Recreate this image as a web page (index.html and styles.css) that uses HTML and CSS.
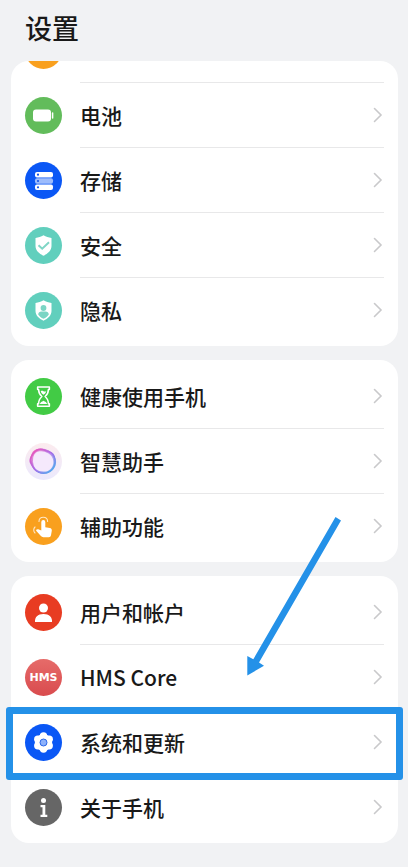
FILE: index.html
```html
<!DOCTYPE html>
<html lang="zh-CN">
<head>
<meta charset="utf-8">
<meta name="viewport" content="width=device-width, initial-scale=1">
<title>设置</title>
<link rel="stylesheet" href="styles.css">
</head>
<body>
<svg class="defs" aria-hidden="true">
  <symbol id="chevron" viewBox="0 0 10 16"><path d="M1.500 1.500 8 8l-6.500 6.500" fill="none" stroke="#c9c9cb" stroke-width="1.600" stroke-linecap="round"/></symbol>
</svg>
<header class="title-bar"><h1>设置</h1></header>
<main class="settings">
  <nav class="card card-scrolled">
    <div class="row row-cut">
      <span class="icon orange"></span>
      <span class="body"></span>
    </div>
    <a class="row" href="#battery">
      <svg class="icon green" viewBox="0 0 37 37" aria-hidden="true"><rect x="8" y="12.500" width="18" height="12" rx="3" fill="#fff"/><path d="M27.600 16v5" stroke="#fff" stroke-width="1.500" stroke-linecap="round"/></svg>
      <span class="body">电池<svg class="chevron"><use href="#chevron"/></svg></span>
    </a>
    <a class="row" href="#storage">
      <svg class="icon blue" viewBox="0 0 37 37" aria-hidden="true"><rect x="10" y="10" width="18" height="5.400" rx="2" fill="#fff"/><rect x="10" y="16.300" width="18" height="5.400" rx="2" fill="#9dbcfc"/><rect x="10" y="22.600" width="18" height="5.400" rx="2" fill="#fff"/><g fill="#1554e8"><circle cx="13" cy="12.700" r="1.100"/><circle cx="13" cy="19" r="1.100"/><circle cx="13" cy="25.300" r="1.100"/></g></svg>
      <span class="body">存储<svg class="chevron"><use href="#chevron"/></svg></span>
    </a>
    <a class="row" href="#security">
      <svg class="icon teal" viewBox="0 0 37 37" aria-hidden="true"><path d="M18.500 8.300c2.500 1.400 5 2.200 8 2.800v8c0 4.500-3.500 7.600-8 9.600-4.500-2-8-5.100-8-9.600v-8c3-.6 5.500-1.400 8-2.800z" fill="#fff"/><path d="m13.500 18.200 3.700 3.500 6.800-6.500" fill="none" stroke="#80d6c6" stroke-width="2"/></svg>
      <span class="body">安全<svg class="chevron"><use href="#chevron"/></svg></span>
    </a>
    <a class="row" href="#privacy">
      <svg class="icon teal" viewBox="0 0 37 37" aria-hidden="true"><path d="M18.500 8.300c2.500 1.400 5 2.200 8 2.800v8c0 4.500-3.500 7.600-8 9.600-4.500-2-8-5.100-8-9.600v-8c3-.6 5.500-1.400 8-2.800z" fill="#fff"/><g fill="#7bd5c4"><circle cx="18.500" cy="16" r="2.900"/><path d="M13.200 22.600c0-2 1.500-3 3.300-3h4c1.800 0 3.300 1 3.300 3-1.200 2-3 3.300-5.300 4.200-2.300-.9-4.100-2.200-5.300-4.200z"/></g></svg>
      <span class="body">隐私<svg class="chevron"><use href="#chevron"/></svg></span>
    </a>
  </nav>

  <nav class="card">
    <a class="row" href="#balance">
      <svg class="icon lime" viewBox="0 0 37 37" aria-hidden="true"><path d="M12.600 9h11.800v2.500h-1c0 3.500-1 5-3.300 7 2.300 2 3.300 3.700 3.300 7.300h1v2.500H12.600v-2.500h1c0-3.600 1-5.300 3.300-7.300-2.300-2-3.300-3.500-3.300-7h-1z" fill="none" stroke="#fff" stroke-width="1.500" stroke-linejoin="round"/><path d="M15.700 13.300c1-.8 1.800-.6 2.800-.1s2 .4 2.800 0c-.4 1.500-1.300 2.600-2.800 3.600-1.500-1-2.400-2-2.800-3.500zM14.800 26c.5-1.700 2-2.400 3.700-3.300 1.700.9 3.200 1.600 3.700 3.300z" fill="#fff"/></svg>
      <span class="body">健康使用手机<svg class="chevron"><use href="#chevron"/></svg></span>
    </a>
    <a class="row" href="#assistant">
      <svg class="icon pale" viewBox="0 0 37 37" aria-hidden="true"><defs><linearGradient id="ring" x1="0" y1="0" x2="1" y2="1"><stop offset="0" stop-color="#f452b4"/><stop offset=".5" stop-color="#a76de8"/><stop offset="1" stop-color="#3eb7f0"/></linearGradient></defs><circle cx="18.500" cy="18.500" r="12" fill="#f5e9fc"/><g fill="none" stroke="url(#ring)"><path d="M13.500 6.500c4-1 6 1 10 2 4 1.200 6 4 6.500 8 .5 5-1 8-3.500 10.500-4 3.500-9 4-13 2-4-1.500-6-5-8-9.500-1.500-4 3-11.500 8-13z" stroke-width="1.500"/><path d="M9.500 8c3.500-3 10-2 14 0 4 2.500 6.500 6 7 11 0 5-4 10-9 11-5 .7-10-1-12-4-2-3.500-4-6-3.500-10 .4-3 1.500-6.500 3.500-8z" stroke-width="1.300" opacity=".8"/><path d="M15 7.200c6 .2 13.500 3 14.200 10.800C30 25 25 29.500 18.500 29.500 11 29.500 7.500 25 7 18.500 6.700 12 9 8 15 7.200z" stroke-width="1.800" opacity=".7"/></g></svg>
      <span class="body">智慧助手<svg class="chevron"><use href="#chevron"/></svg></span>
    </a>
    <a class="row" href="#accessibility">
      <svg class="icon orange" viewBox="0 0 37 37" aria-hidden="true"><path d="M16.300 14a2 2 0 0 1 4 0v5.300l4.500.7c1.500.3 2.200 1.200 2 2.700l-.8 4.600c-.3 1.300-1 1.900-2.200 1.900h-5.500c-1 0-1.700-.4-2.400-1.100l-4.500-5c-.9-1.200.5-2.400 1.900-1.800l3 1.300z" fill="#fff"/><g fill="none" stroke="#fff" stroke-width="1.100" stroke-linecap="round" opacity=".75"><path d="M14 13.500c0-5.700 8.600-5.700 8.600 0M10 19c-1.700 1.600-1.700 4.200 0 6"/></g></svg>
      <span class="body">辅助功能<svg class="chevron"><use href="#chevron"/></svg></span>
    </a>
  </nav>

  <nav class="card">
    <a class="row" href="#accounts">
      <svg class="icon red" viewBox="0 0 37 37" aria-hidden="true"><g fill="#fff"><circle cx="18.500" cy="14" r="4.500"/><path d="M10 28c-.4-5 2.700-8 8.500-8s8.900 3 8.500 8z"/></g></svg>
      <span class="body">用户和帐户<svg class="chevron"><use href="#chevron"/></svg></span>
    </a>
    <a class="row" href="#hms">
      <span class="icon coral" aria-hidden="true">HMS</span>
      <span class="body">HMS Core<svg class="chevron"><use href="#chevron"/></svg></span>
    </a>
    <a class="row row-marked" href="#system">
      <svg class="icon blue" viewBox="0 0 37 37" aria-hidden="true"><g fill="#fff"><circle cx="18.500" cy="18.500" r="8.600"/><circle cx="18.500" cy="12" r="3.700"/><circle cx="24.200" cy="15.200" r="3.700"/><circle cx="24.200" cy="21.800" r="3.700"/><circle cx="18.500" cy="25" r="3.700"/><circle cx="12.800" cy="21.800" r="3.700"/><circle cx="12.800" cy="15.200" r="3.700"/></g><circle cx="18.500" cy="18.500" r="3.500" fill="#8db1fb" stroke="#2b66e8" stroke-width="1"/></svg>
      <span class="body">系统和更新<svg class="chevron"><use href="#chevron"/></svg></span>
    </a>
    <a class="row" href="#about">
      <svg class="icon gray" viewBox="0 0 37 37" aria-hidden="true"><circle cx="18.500" cy="11.500" r="2.500" fill="#fff"/><path d="M15.500 16h4.800v9.800h2v2.200h-6.800v-2.200h2v-7.600h-2z" fill="#fff"/></svg>
      <span class="body">关于手机<svg class="chevron"><use href="#chevron"/></svg></span>
    </a>
  </nav>
  <svg class="arrow" viewBox="0 0 96 160" aria-hidden="true"><path d="M89.500 0 95 3.500 13 145.500l5 3.200L1.300 158.500V139l6 3.300z" fill="#2491e8"/></svg>
</main>
</body>
</html>
```
FILE: styles.css
```css
* { box-sizing: border-box; }

body {
  margin: 0;
  background: #f1f2f4;
  color: #191919;
  font-family: "Noto Sans CJK SC", sans-serif;
  font-weight: 500;
}

.defs { display: none; }

.title-bar {
  height: 61px;
  padding: 8px 25px 0;
}

h1 {
  margin: 0;
  font-size: 27px;
  font-weight: 500;
  line-height: 40px;
}

.settings {
  position: relative;
  display: flex;
  flex-direction: column;
  gap: 14px;
  padding: 0 10px 24px 11px;
}

.card {
  padding: 4px 14px;
  background: #fff;
  border-radius: 18px;
}

.card-scrolled {
  padding-top: 0;
  overflow: hidden;
}

.row {
  position: relative;
  display: flex;
  align-items: center;
  gap: 18px;
  color: inherit;
  text-decoration: none;
}

.row-cut { margin-top: -43px; }

.body {
  flex: 1;
  display: flex;
  align-items: center;
  justify-content: space-between;
  height: 65px;
  border-bottom: 1px solid #e8e8e9;
  font-size: 21px;
  line-height: 32px;
}

.row:last-child .body {
  height: 64px;
  border-bottom: 0;
}

.icon {
  flex: none;
  width: 37px;
  height: 37px;
  border-radius: 50%;
}

.chevron {
  width: 10px;
  height: 16px;
  margin-right: 1px;
}

.orange { background: #f9a01e; }
.green { background: #62bc5b; }
.blue { background: #0a57f5; }
.teal { background: #61cfbd; }
.lime { background: #42cb45; }
.pale { background: linear-gradient(#fcebee, #ebe9fd); }
.red { background: #e83c22; }
.gray { background: #666; }

.coral {
  background: linear-gradient(#e66b69, #d94b4e);
  color: #fff;
  font: bold 11px/37px "DejaVu Sans", sans-serif;
  text-align: center;
}

.row-marked::after {
  content: "";
  position: absolute;
  inset: -3px -19px -5px;
  border: 7px solid #2491e8;
  border-radius: 3px;
}

.arrow {
  position: absolute;
  top: 456px;
  right: 66px;
  width: 96px;
  height: 160px;
  pointer-events: none;
}
```
